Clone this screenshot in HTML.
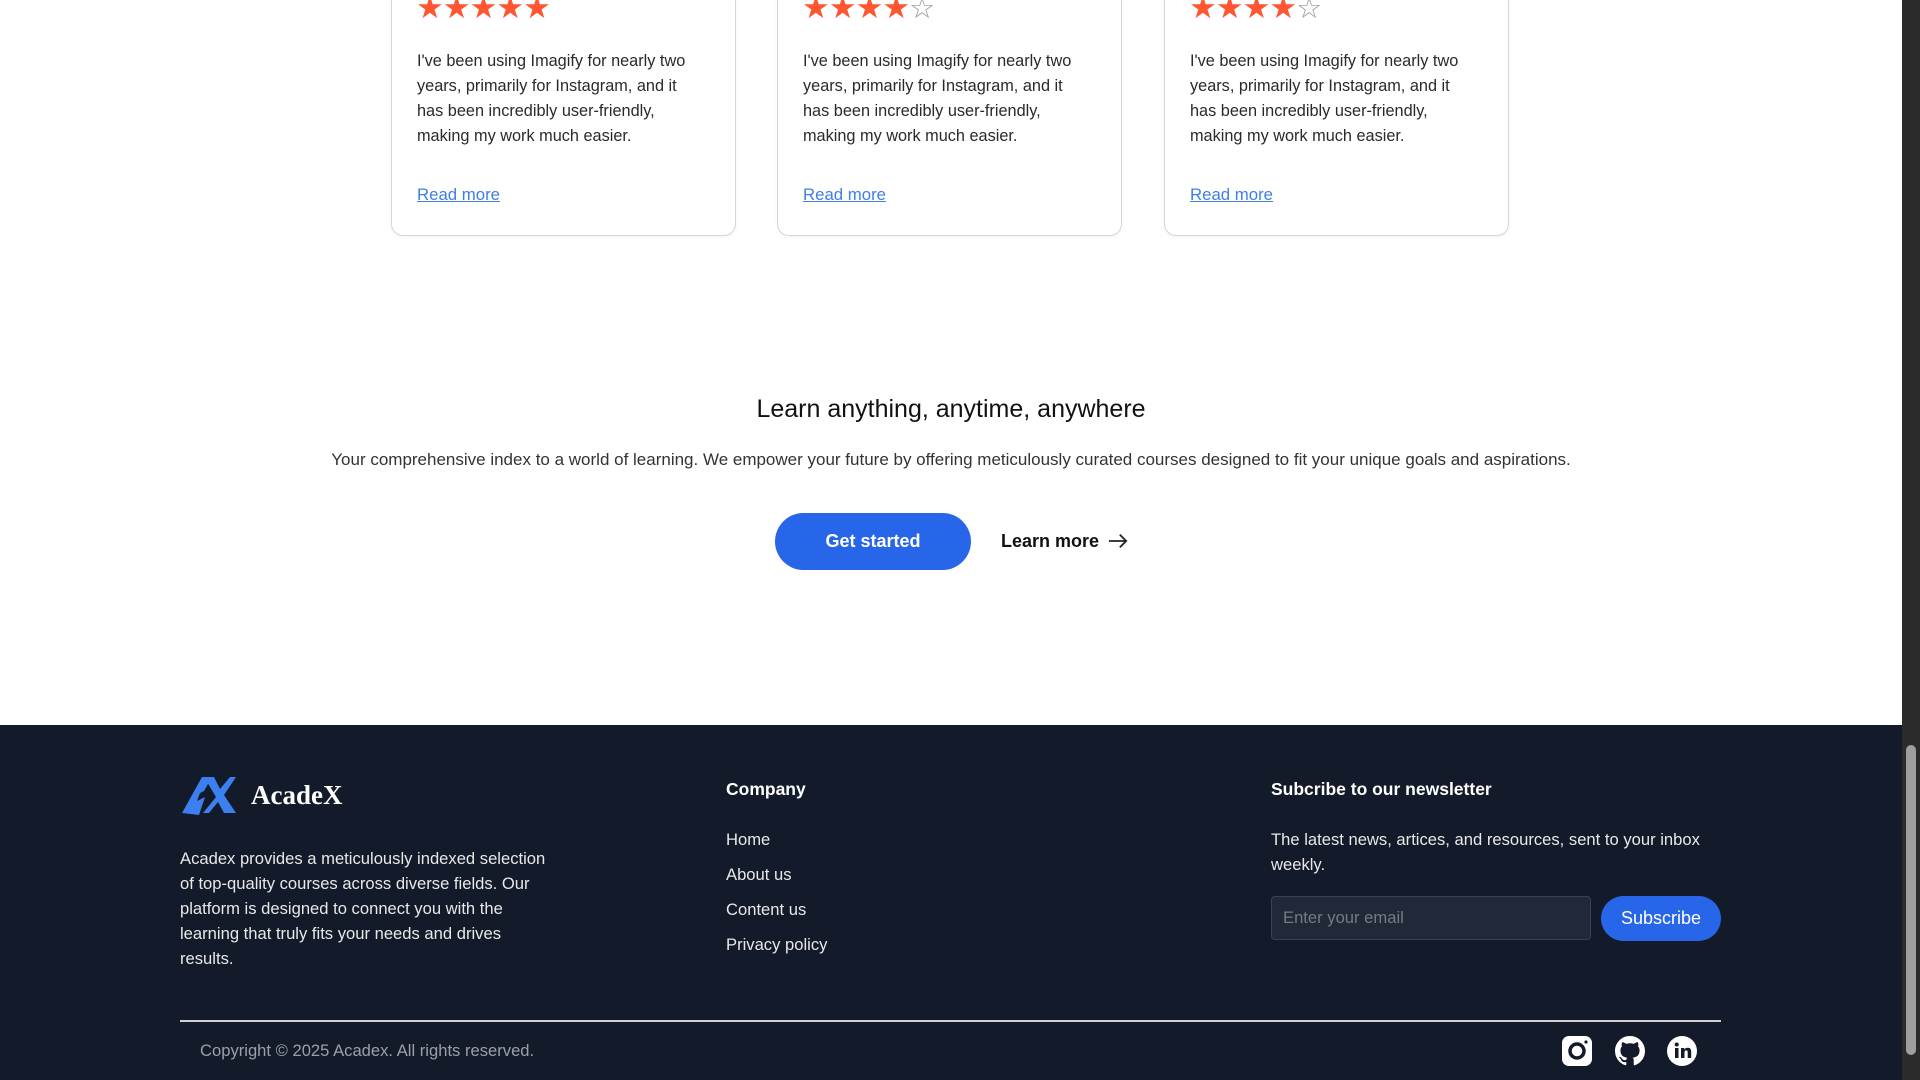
<!DOCTYPE html>
<html><head><meta charset="utf-8"><style>
*{margin:0;padding:0;box-sizing:border-box}
html,body{width:1920px;height:1080px;overflow:hidden;background:#fff;font-family:"Liberation Sans",sans-serif}
.abs{position:absolute}
.card{position:absolute;top:-20px;width:345px;height:256px;border:1.5px solid #d6d6d6;border-radius:12px;background:#fff;box-shadow:0 2px 4px rgba(0,0,0,.04)}
.stars{position:absolute;left:24px;top:11px;font-size:31px;line-height:31px;color:#ff5530;letter-spacing:-1px;white-space:nowrap}
.stars .e{color:#999;font-size:29px}
.ct{position:absolute;left:25px;top:68px;font-size:16.3px;line-height:25px;color:#2a2a2a;width:290px}
.rm{position:absolute;left:25px;top:204px;font-size:16.8px;color:#3f7fe6;text-decoration:underline}
footer{position:absolute;left:0;top:725px;width:1902px;height:355px;background:#131a29;color:#fff}
.sb{position:absolute;right:0;top:0;width:18px;height:1080px;background:#2b2b2b}
</style></head><body>
<div class="card" style="left:391px"><div class="stars">★★★★★</div><div class="ct">I've been using Imagify for nearly two years, primarily for Instagram, and it has been incredibly user-friendly, making my work much easier.</div><div class="rm">Read more</div></div>
<div class="card" style="left:777px"><div class="stars">★★★★<span class="e">☆</span></div><div class="ct">I've been using Imagify for nearly two years, primarily for Instagram, and it has been incredibly user-friendly, making my work much easier.</div><div class="rm">Read more</div></div>
<div class="card" style="left:1164px"><div class="stars">★★★★<span class="e">☆</span></div><div class="ct">I've been using Imagify for nearly two years, primarily for Instagram, and it has been incredibly user-friendly, making my work much easier.</div><div class="rm">Read more</div></div>

<div class="abs" style="left:0;width:1902px;top:395px;text-align:center;font-size:25px;color:#111">Learn anything, anytime, anywhere</div>
<div class="abs" style="left:0;width:1902px;top:450px;text-align:center;font-size:17px;color:#333">Your comprehensive index to a world of learning. We empower your future by offering meticulously curated courses designed to fit your unique goals and aspirations.</div>
<div class="abs" style="left:775px;top:513px;width:196px;height:57px;border-radius:29px;background:#2766e8;color:#fff;font-size:18px;font-weight:bold;text-align:center;line-height:57px">Get started</div>
<div class="abs" style="left:1001px;top:530px;font-size:18px;font-weight:bold;color:#111;line-height:22px">Learn more <svg width="20" height="16" viewBox="0 0 22 16" style="vertical-align:-2px;margin-left:4px"><path d="M1 8H20M13 1l7 7-7 7" fill="none" stroke="#222" stroke-width="2"/></svg></div>

<footer>
<svg class="abs" style="left:180px;top:50px" width="56" height="40" viewBox="0 0 56 40"><path d="M2 38L22 2h10l-8 14-4 2-3 8 8-4-6 18z M24 2h10l6 12 10-12h6L44 20l12 18H44l-6-11-9 11h-6l13-16z" fill="#3b7ff0"/></svg>
<div class="abs" style="left:251px;top:55px;font-family:'Liberation Serif',serif;font-size:27px;font-weight:bold">AcadeX</div>
<div class="abs" style="left:180px;top:121px;width:378px;font-size:16.6px;line-height:25px;color:#e8e8e8">Acadex provides a meticulously indexed selection of top-quality courses across diverse fields. Our platform is designed to connect you with the learning that truly fits your needs and drives results.</div>
<div class="abs" style="left:726px;top:54px;font-size:17.5px;font-weight:bold">Company</div>
<div class="abs" style="left:726px;top:97px;font-size:16.6px;line-height:35px;color:#e8e8e8">Home<br>About us<br>Content us<br>Privacy policy</div>
<div class="abs" style="left:1271px;top:54px;font-size:17.5px;font-weight:bold">Subcribe to our newsletter</div>
<div class="abs" style="left:1271px;top:102px;width:460px;font-size:16.6px;line-height:25px;color:#e8e8e8">The latest news, artices, and resources, sent to your inbox weekly.</div>
<div class="abs" style="left:1271px;top:171px;width:320px;height:44px;background:#212939;border:1px solid #3a4252;border-radius:4px;color:#737a87;font-size:16.6px;line-height:42px;padding-left:11px">Enter your email</div>
<div class="abs" style="left:1601px;top:171px;width:120px;height:45px;background:#2766e8;border-radius:23px;font-size:18px;text-align:center;line-height:45px">Subscribe</div>
<div class="abs" style="left:180px;top:295px;width:1541px;height:2px;background:#d0d0d0"></div>
<div class="abs" style="left:200px;top:316px;font-size:16.6px;color:#9aa0aa">Copyright © 2025 Acadex. All rights reserved.</div>
<svg class="abs" style="left:1562px;top:311px" width="30" height="30" viewBox="0 0 30 30"><rect x="0" y="0" width="30" height="30" rx="7" fill="#fff"/><circle cx="15" cy="15" r="7" fill="none" stroke="#131a29" stroke-width="3.5"/><circle cx="24" cy="6" r="1.6" fill="#131a29"/></svg>
<svg class="abs" style="left:1615px;top:311px" width="30" height="30" viewBox="0 0 16 16"><path fill="#fff" d="M8 0C3.58 0 0 3.58 0 8c0 3.540 2.29 6.53 5.47 7.59.4.07.55-.17.55-.38v-1.33c-2.23.48-2.7-1.07-2.7-1.07-.36-.93-.89-1.17-.89-1.17-.73-.5.05-.49.05-.49.8.06 1.23.83 1.23.83.72 1.23 1.870.87 2.33.66.07-.52.28-.87.5-1.07-1.78-.2-3.64-.89-3.64-3.950 0-.87.31-1.59.82-2.15-.08-.2-.36-1.02.08-2.12 0 0 .67-.21 2.2.82a7.6 7.6 0 014 0c1.53-1.04 2.2-.82 2.2-.82.44 1.1.16 1.92.08 2.12.51.56.82 1.27.82 2.15 0 3.07-1.87 3.75-3.65 3.95.29.25.54.73.54 1.48v2.2c0 .21.15.46.55.38A8 8 0 0016 8c0-4.42-3.58-8-8-8z"/></svg>
<svg class="abs" style="left:1667px;top:311px" width="30" height="30" viewBox="0 0 30 30"><circle cx="15" cy="15" r="15" fill="#fff"/><rect x="8" y="12" width="3.5" height="10" fill="#131a29"/><circle cx="9.75" cy="8.5" r="2" fill="#131a29"/><path d="M14 12h3.3v1.6c.6-1.1 1.8-1.9 3.5-1.9 2.6 0 3.4 1.6 3.4 4.2V22h-3.5v-5.4c0-1.3-.3-2.2-1.5-2.2s-1.7.9-1.7 2.2V22H14z" fill="#131a29"/></svg>
</footer>
<div class="sb"><div style="position:absolute;left:4px;top:745px;width:10px;height:310px;background:#9e9e9e;border-radius:5px"></div></div>
</body></html>
